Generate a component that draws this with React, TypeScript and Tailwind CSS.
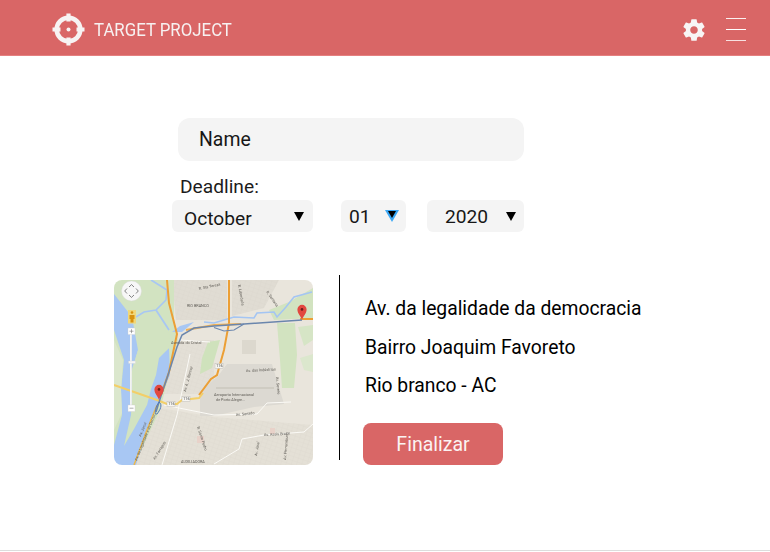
import React from 'react';

function TargetLogo() {
  return (
    <svg width="33" height="33" viewBox="0 0 33 33" className="shrink-0">
      <circle cx="16.5" cy="16.5" r="11.8" fill="none" stroke="#f7f3f3" strokeWidth="4.6" />
      <path d="M16.5 0.5v8M16.5 24.5v8M0.5 16.5h8M24.5 16.5h8" stroke="#f7f3f3" strokeWidth="4.2" />
      <circle cx="16.5" cy="16.5" r="2" fill="#f7f3f3" />
    </svg>
  );
}

function Gear() {
  return (
    <svg width="26" height="26" viewBox="0 0 24 24" fill="#f8f5f5">
      <path
        fillRule="evenodd"
        d="M19.43 12.98c.04-.32.07-.64.07-.98s-.03-.66-.07-.98l2.11-1.65c.19-.15.24-.42.12-.64l-2-3.46c-.12-.22-.39-.3-.61-.22l-2.49 1c-.52-.4-1.08-.73-1.69-.98l-.38-2.65C14.46 2.18 14.25 2 14 2h-4c-.25 0-.46.18-.49.42l-.38 2.65c-.61.25-1.17.59-1.69.98l-2.49-1c-.23-.09-.49 0-.61.22l-2 3.46c-.13.22-.07.49.12.64l2.11 1.65c-.04.32-.07.65-.07.98s.03.66.07.98l-2.11 1.65c-.19.15-.24.42-.12.64l2 3.46c.12.22.39.3.61.22l2.49-1c.52.4 1.08.73 1.69.98l.38 2.65c.03.24.24.42.49.42h4c.25 0 .46-.18.49-.42l.38-2.65c.61-.25 1.17-.59 1.69-.98l2.49 1c.23.09.49 0 .61-.22l2-3.46c.12-.22.07-.49-.12-.64l-2.11-1.65zM12 15.5c-1.93 0-3.5-1.57-3.5-3.5s1.57-3.5 3.5-3.5 3.5 1.57 3.5 3.5-1.57 3.5-3.5 3.5z"
      />
    </svg>
  );
}

function Pin({ x, y }: { x: number; y: number }) {
  return (
    <g transform={`translate(${x} ${y})`}>
      <path d="M0 0C-.8 -4 -4.6 -6 -4.6 -10.6a4.6 4.6 0 0 1 9.2 0C4.6 -6 .8 -4 0 0Z" fill="#e2483f" />
      <circle cx="0" cy="-10.6" r="1.3" fill="#6d1d1a" />
    </g>
  );
}

function Badge({ x, y }: { x: number; y: number }) {
  return (
    <g>
      <rect x={x - 4} y={y - 2.5} width="8" height="5" fill="#f6f5f1" stroke="#b5b1a8" strokeWidth=".4" />
      <text x={x - 2.8} y={y + 1.4} fontSize="3.8" fill="#444">116</text>
    </g>
  );
}

// street map, drawn in the panel's own 199x185 pixels
function MapPicture() {
  return (
    <svg viewBox="0 0 199 185" className="block h-full w-full">
      <defs>
        <filter id="soft" x="-5%" y="-5%" width="110%" height="110%">
          <feGaussianBlur stdDeviation=".55" />
        </filter>
        <pattern id="blocks" width="5" height="4" patternUnits="userSpaceOnUse" patternTransform="rotate(18)">
          <path d="M0 0H5M0 0V4" fill="none" stroke="#d3cec4" strokeWidth=".7" />
        </pattern>
      </defs>
      <g filter="url(#soft)">
        <rect width="199" height="185" fill="#e9e5dc" />
        {/* urban blocks */}
        <path d="M58 0H113V40H62Z" fill="#e0dcd3" />
        <path d="M58 0H113V40H62Z" fill="url(#blocks)" opacity=".4" />
        <path d="M118 0H165L150 28L118 36Z" fill="#e0dcd3" />
        <path d="M118 0H165L150 28L118 36Z" fill="url(#blocks)" opacity=".45" />
        <path d="M62 60H100V100L86 114H50Z" fill="#e3dfd6" />
        <path d="M62 60H100V100L86 114H50Z" fill="url(#blocks)" opacity=".35" />
        <path d="M20 185L46 128L100 137L199 145V185Z" fill="#e4e0d6" />
        <path d="M20 185L46 128L100 137L199 145V185Z" fill="url(#blocks)" opacity=".45" />
        <path d="M128 60H142V74H128Z" fill="#dcd8ce" />
        {/* vegetation */}
        <path d="M0 0H60V40L64 60L46 130L20 185H0Z" fill="#d2e3c1" />
        <path d="M155 30L175 22L199 8V38L160 40Z" fill="#d2e3c0" />
        <path d="M163 43H181L183 75L180 108H168L166 80Z" fill="#d2e3c0" />
        <path d="M184 47L199 45V60L190 66Z" fill="#d6e5c6" />
        <path d="M186 78L199 74V92L190 90Z" fill="#dbe7cd" />
        <path d="M94 62L106 60L98 88L86 94L88 78Z" fill="#cfe2bc" />
        <path d="M83 156H90V163H83ZM156 148H161V154H156Z" fill="#e8d2c9" />
        {/* airport */}
        <path d="M113 84H158L170 124L140 127L100 136H86L86 112L104 96Z" fill="#dcd9d2" />
        <path d="M102 108H160" stroke="#cbc7be" strokeWidth="1.5" />
        {/* river */}
        <path
          d="M0 14L18 37L24 70L18 92L37 95L43 78L55 68L56 95L43 125L33 150L22 185H0V165L8 135L7 110L10 80L0 50Z"
          fill="#a8c7f3"
        />
        <path d="M22 33L42 32L55 53L56 67L45 78L42 95L37 109L33 125L20 149L10 166L17 135L18 112L17 92L25 67L23 47Z" fill="#d2e3c1" />
        <path d="M0 60L9 80L7 110L8 133L0 150Z" fill="#dbe7cd" />
        <path d="M22 37L30 32L42 30L52 20L53 10L37 0" fill="none" stroke="#a8c7f3" strokeWidth="1.6" />
        <path d="M42 30L55 50" stroke="#a8c7f3" strokeWidth="1.8" />
        <path d="M58 52L66 46L80 42L68 52Z" fill="#a8c7f3" />
        <path
          d="M90 42L100 43L120 37L140 38L143 33L160 32L163 37L172 27L180 17L198 12"
          fill="none"
          stroke="#a4c5f3"
          strokeWidth="1.5"
        />
        {/* white streets */}
        <g fill="none" stroke="#fbfaf6" strokeWidth="1">
          <path d="M76 74L63 135L48 185" />
          <path d="M50 125L100 135L143 134L153 123L177 122" />
          <path d="M199 144L190 152L150 155L128 159L125 169L100 184" />
          <path d="M96 62L66 60" />
        </g>
        {/* highways */}
        <path d="M0 105L43 120L53 124L63 124L68 120L85 118L89 113" fill="none" stroke="#f3cf68" strokeWidth="2" />
        <path d="M20 185L33 150L43 125" fill="none" stroke="#ebb84e" strokeWidth="1.5" />
        <path d="M53 0L55 23L63 54L55 92L47 115" fill="none" stroke="#ec9f34" strokeWidth="2" />
        <path d="M115 0V43L110 70L103 95L97 99L85 115" fill="none" stroke="#ec9f34" strokeWidth="2" />
        <path d="M72 50L100 45L127 44" fill="none" stroke="#eeb055" strokeWidth="2" />
        <path d="M186 39H199" fill="none" stroke="#ec9f34" strokeWidth="2" />
        {/* route */}
        <path
          d="M42 132L47 116L55 92L63 67L68 55L80 48L100 46L130 44L188 40"
          fill="none"
          stroke="#6b86ad"
          strokeWidth="1.5"
        />
        <path d="M100 47.5L110 51L120 50L130 44" fill="none" stroke="#6b86ad" strokeWidth="1.2" />
        <path d="M45 122C49 125 46 130 43 134C40 135 41 128 45 122Z" fill="none" stroke="#4f78b8" strokeWidth="1" />
        {/* labels */}
        <g fontFamily="Roboto, sans-serif" fill="#5f5c56" fontSize="3.8">
          <text x="73" y="27">RIO BRANCO</text>
          <text x="57" y="64">Avenida do Cristal</text>
          <text x="100" y="116">Aeroporto Internacional</text>
          <text x="102" y="121">de Porto Alegre...</text>
          <text x="122" y="136" transform="rotate(-6 122 136)">Av. Senado</text>
          <text x="150" y="156" transform="rotate(-3 150 156)">Av. Assis Brasil</text>
          <text x="67" y="183">AUXILIADORA</text>
          <text x="85" y="10" transform="rotate(-12 85 10)">R. Sta Tereza</text>
          <text x="124" y="5" transform="rotate(80 124 5)">R. Liberdade</text>
          <text x="152" y="12" transform="rotate(55 152 12)">R. Santana</text>
          <text x="132" y="92" transform="rotate(-3 132 92)">Av. das Indústrias</text>
          <text x="162" y="97" transform="rotate(85 162 97)">Av. Severo</text>
          <text x="72" y="112" transform="rotate(-75 72 112)">Av. A. J. Renner</text>
          <text x="83" y="147" transform="rotate(72 83 147)">R. Santo Pedro</text>
          <text x="23" y="181" transform="rotate(-68 23 181)">Av. da Legalidade e da Democ.</text>
          <text x="27" y="157" transform="rotate(-68 27 157)">Av. Jacuí</text>
          <text x="41" y="180" transform="rotate(-58 41 180)">Av. Farrapos</text>
          <text x="143" y="176" transform="rotate(-80 143 176)">Av. Jaraí</text>
          <text x="172" y="180" transform="rotate(-85 172 180)">Av. Pernambuco</text>
        </g>
        <Badge x={57} y={124} />
        <Badge x={72} y={119} />
        <Badge x={105} y={86} />
      </g>
      {/* map controls */}
      <g>
        <rect x="16" y="54" width="1.8" height="72" fill="#f3f3f1" />
        <rect x="14" y="48" width="7" height="6.5" fill="#fff" stroke="#cfcfcf" strokeWidth=".4" />
        <path d="M15.5 51.2h4M17.5 49.2v4" stroke="#777" strokeWidth=".6" />
        <rect x="14" y="125" width="7" height="6.5" fill="#fff" stroke="#cfcfcf" strokeWidth=".4" />
        <path d="M15.5 128.2h4" stroke="#777" strokeWidth=".6" />
        <rect x="14.5" y="81" width="7" height="2.5" rx=".6" fill="#f4f4f4" stroke="#ccc" strokeWidth=".3" />
        <rect x="14" y="30" width="8" height="13.5" fill="#f1d77a" />
        <circle cx="18" cy="32.5" r="1.3" fill="#d8920f" />
        <path d="M15.5 35H20.5V39H19.5V42.5H16.5V39H15.5Z" fill="#d8920f" />
        <circle cx="17.5" cy="11" r="10" fill="#f7f7f7" stroke="#dcdcdc" strokeWidth=".4" />
        <path d="M15 7l2.5-2.4L20 7M15 15l2.5 2.4L20 15M13 8.5L10.700 11 13 13.5M22 8.5L24.300 11 22 13.5" fill="none" stroke="#666" strokeWidth=".8" />
      </g>
      <Pin x={45} y={120} />
      <Pin x={188} y={40} />
    </svg>
  );
}

function SelectBox({ label, className, textClass, arrow }: { label: string; className: string; textClass: string; arrow: React.ReactNode }) {
  return (
    <div className={`flex h-8 items-center rounded-md bg-[#f4f4f4] text-[19.2px] text-[#171717] ${className}`}>
      <span className={textClass}>{label}</span>
      {arrow}
    </div>
  );
}

const blackArrow = <span className="ml-auto h-0 w-0 border-x-[5px] border-t-[9px] border-x-transparent border-t-black" />;

export default function App() {
  return (
    <div className="flex h-[552px] w-[770px] flex-col overflow-hidden bg-white font-['Roboto',sans-serif]">
      <header className="flex h-14 items-center border-b border-[#e58080] bg-[#d96666] pl-[52px] pr-6 pt-1">
        <TargetLogo />
        <span className="ml-[9px] origin-left text-[19px] leading-none text-[#f7f1f1] [transform:scaleX(.885)]">TARGET PROJECT</span>
        <div className="ml-auto flex items-center gap-[19px]">
          <Gear />
          <div className="flex h-[23px] w-[20px] flex-col justify-between">
            <span className="h-px bg-white/90" />
            <span className="h-px bg-white" />
            <span className="h-px bg-white/80" />
          </div>
        </div>
      </header>

      <main className="flex flex-1 flex-col">
        <div className="ml-[178px] mt-[62px] flex h-[43px] w-[346px] items-center rounded-xl bg-[#f4f4f4] pl-[21px] text-[19.4px] text-[#171717]">Name</div>
        <div className="ml-[180px] mt-[14px] text-[19.2px] leading-[24px] text-[#1c1c1c]">Deadline:</div>
        <div className="ml-[172px] mt-[1px] flex">
          <SelectBox label="October" className="w-[141px] pl-3 pr-[9px]" textClass="translate-y-[3px]" arrow={blackArrow} />
          <SelectBox
            label="01"
            className="ml-7 w-[65px] pl-2 pr-[7px]"
            textClass="translate-y-px"
            arrow={
              <span className="relative ml-auto h-0 w-0 border-x-[7px] border-t-[12px] border-x-transparent border-t-[#3aa7f5]">
                <span className="absolute -left-[4px] -top-[11px] h-0 w-0 border-x-[4px] border-t-[7px] border-x-transparent border-t-black" />
              </span>
            }
          />
          <SelectBox label="2020" className="ml-[21px] w-[97px] pl-[18px] pr-2" textClass="translate-y-px" arrow={blackArrow} />
        </div>

        <div className="mt-[43px] flex items-start pl-[114px]">
          <div className="mt-[5px] h-[185px] w-[199px] overflow-hidden rounded-lg">
            <MapPicture />
          </div>
          <div className="ml-[26px] h-[185px] w-px bg-black" />
          <div className="ml-[23px] flex flex-col">
            <div className="ml-[2px] mt-[22px] flex flex-col gap-[15px] text-[19.3px] leading-[23.5px] text-black">
              <p>Av. da legalidade da democracia</p>
              <p>Bairro Joaquim Favoreto</p>
              <p>Rio branco - AC</p>
            </div>
            <button className="mt-[25px] h-[42px] w-[140px] rounded-lg bg-[#d96666] pt-[2px] text-[19.5px] text-[#fbf3f3]">Finalizar</button>
          </div>
        </div>
      </main>
      <div className="mb-px h-px bg-[#dddddd]" />
    </div>
  );
}
